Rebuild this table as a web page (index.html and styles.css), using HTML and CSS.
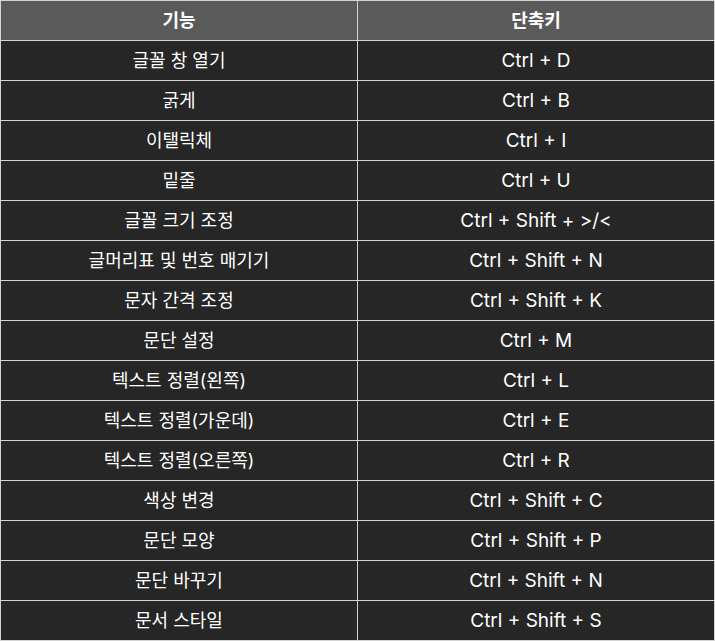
FILE: index.html
```html
<!DOCTYPE html>
<html lang="ko">
<head>
<meta charset="utf-8">
<link rel="stylesheet" href="styles.css">
</head>
<body>
<table class="shortcuts">
  <thead>
    <tr><th>기능</th><th>단축키</th></tr>
  </thead>
  <tbody>
    <tr><td>글꼴 창 열기</td><td class="key">Ctrl + D</td></tr>
    <tr><td>굵게</td><td class="key">Ctrl + B</td></tr>
    <tr><td>이탤릭체</td><td class="key">Ctrl + I</td></tr>
    <tr><td>밑줄</td><td class="key">Ctrl + U</td></tr>
    <tr><td>글꼴 크기 조정</td><td class="key">Ctrl + Shift + &gt;/&lt;</td></tr>
    <tr><td>글머리표 및 번호 매기기</td><td class="key">Ctrl + Shift + N</td></tr>
    <tr><td>문자 간격 조정</td><td class="key">Ctrl + Shift + K</td></tr>
    <tr><td>문단 설정</td><td class="key">Ctrl + M</td></tr>
    <tr><td>텍스트 정렬(왼쪽)</td><td class="key">Ctrl + L</td></tr>
    <tr><td>텍스트 정렬(가운데)</td><td class="key">Ctrl + E</td></tr>
    <tr><td>텍스트 정렬(오른쪽)</td><td class="key">Ctrl + R</td></tr>
    <tr><td>색상 변경</td><td class="key">Ctrl + Shift + C</td></tr>
    <tr><td>문단 모양</td><td class="key">Ctrl + Shift + P</td></tr>
    <tr><td>문단 바꾸기</td><td class="key">Ctrl + Shift + N</td></tr>
    <tr><td>문서 스타일</td><td class="key">Ctrl + Shift + S</td></tr>
  </tbody>
</table>
</body>
</html>
```

FILE: styles.css
```css
html, body {
  margin: 0;
  padding: 0;
  background: #ffffff;
}
.shortcuts {
  border-collapse: collapse;
  width: 715px;
  table-layout: fixed;
  font-family: Inter, "Noto Sans CJK KR", sans-serif;
  font-size: 18px;
  color: #ffffff;
}
.shortcuts tr {
  height: 40px;
}
.shortcuts th,
.shortcuts td {
  border: 1px solid #d4d4d4;
  padding: 0 8px;
  text-align: center;
  vertical-align: middle;
  line-height: 20px;
}
.shortcuts th {
  background: #5a5a5a;
  font-weight: 700;
}
.shortcuts td {
  background: #262626;
  font-weight: 400;
}
.shortcuts td.key {
  font-size: 19px;
}
```
